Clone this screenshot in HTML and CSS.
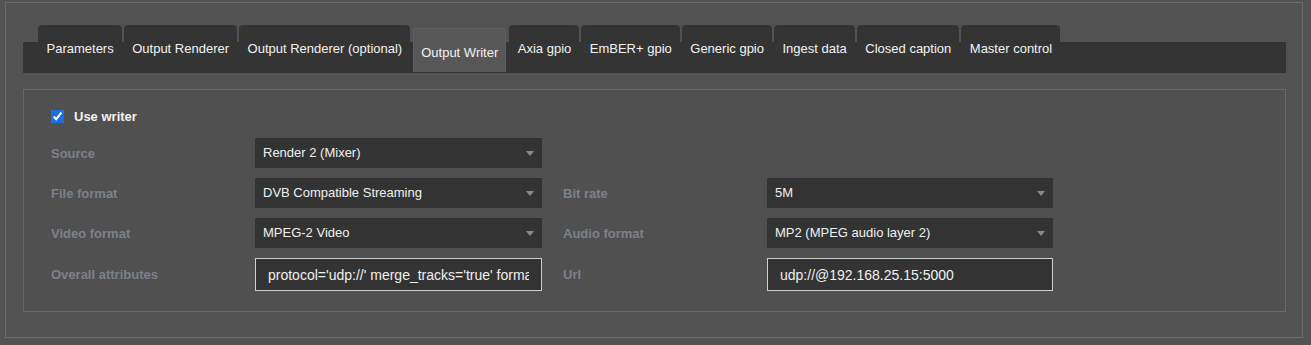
FILE: index.html
```html
<!DOCTYPE html>
<html>
<head lang="en">
    <meta charset="UTF-8">
    <title>Output Writer</title>
    <link rel="stylesheet" href="styles.css">
</head>
<body>
<div class="frame">
    <ul class="tabGroup">
        <li class="tab">Parameters</li>
        <li class="tab">Output Renderer</li>
        <li class="tab">Output Renderer (optional)</li>
        <li class="tab selectedTab">Output Writer</li>
        <li class="tab">Axia gpio</li>
        <li class="tab">EmBER+ gpio</li>
        <li class="tab">Generic gpio</li>
        <li class="tab">Ingest data</li>
        <li class="tab">Closed caption</li>
        <li class="tab">Master control</li>
    </ul>
    <div class="panel">
        <label class="checkRow">
            <input type="checkbox" checked>
            <span>Use writer</span>
        </label>
        <div class="row">
            <div class="field">
                <span class="label">Source</span>
                <div class="select">Render 2 (Mixer)</div>
            </div>
        </div>
        <div class="row">
            <div class="field">
                <span class="label">File format</span>
                <div class="select">DVB Compatible Streaming</div>
            </div>
            <div class="field right">
                <span class="label">Bit rate</span>
                <div class="select">5M</div>
            </div>
        </div>
        <div class="row">
            <div class="field">
                <span class="label">Video format</span>
                <div class="select">MPEG-2 Video</div>
            </div>
            <div class="field right">
                <span class="label">Audio format</span>
                <div class="select">MP2 (MPEG audio layer 2)</div>
            </div>
        </div>
        <div class="row inputRow">
            <div class="field">
                <span class="label">Overall attributes</span>
                <input class="text" type="text" value="protocol='udp://' merge_tracks='true' format='mpegts'">
            </div>
            <div class="field right">
                <span class="label">Url</span>
                <input class="text" type="text" value="udp://@192.168.25.15:5000">
            </div>
        </div>
    </div>
</div>
</body>
</html>
```

FILE: styles.css
```css
*{
    margin: 0;
    padding: 0;
    box-sizing: border-box;
}
html, body{
    height: 100%;
}
body{
    background-color: #525252;
    font-family: "Liberation Sans", Arial, sans-serif;
    font-size: 13px;
    color: #f2f2f2;
    overflow: hidden;
}
.frame{
    width: 1298px;
    margin: 2px 0 0 5px;
    border: 1px solid #6a6a6a;
    padding: 22px 16px 25px 17px;
}
ul.tabGroup{
    list-style: none;
    display: flex;
    height: 48px;
    padding-left: 15px;
    background: linear-gradient(to bottom, transparent 17px, #343434 17px);
}
.tabGroup .tab{
    height: 48px;
    line-height: 48px;
    padding: 0 8px 0 8.5px;
    margin-right: 2px;
    background-color: #343434;
    border-radius: 4px 4px 0 0;
    white-space: nowrap;
    cursor: pointer;
}
.tabGroup .tab.selectedTab{
    height: 44px;
    line-height: 44px;
    margin: 3px 3px 0 1px;
    background-color: #575757;
    border: 1px solid #5f5f5f;
    border-bottom: none;
    border-radius: 2px 2px 0 0;
    padding: 2px 7px 0 7px;
}
.panel{
    margin-top: 16px;
    height: 223px;
    border: 1px solid #676767;
    background-color: #505050;
    padding: 20px 0 0 27px;
}
.checkRow{
    display: flex;
    align-items: center;
    height: 13px;
    margin-bottom: 15px;
    font-weight: bold;
}
.checkRow input{
    width: 13px;
    height: 13px;
    margin: 0 10px 0 0;
    accent-color: #1a6fe0;
}
.row{
    display: flex;
    height: 30px;
    margin-bottom: 10px;
}
.row.inputRow{
    height: 33px;
}
.field{
    display: flex;
    align-items: center;
    width: 491px;
}
.field.right{
    margin-left: 21px;
    width: 490px;
}
.label{
    width: 204px;
    flex: none;
    font-weight: bold;
    color: #7c818b;
}
.select{
    position: relative;
    flex: 1;
    height: 30px;
    line-height: 29px;
    padding-left: 8px;
    background-color: #333333;
    color: #f0f0f0;
}
.select::after{
    content: "";
    position: absolute;
    right: 8px;
    top: 13px;
    border-left: 4px solid transparent;
    border-right: 4px solid transparent;
    border-top: 5px solid #8a8a8a;
}
.text{
    flex: 1;
    width: 0;
    height: 33px;
    padding: 0 12px;
    background-color: #333333;
    border: 1px solid #cfcfcf;
    color: #f0f0f0;
    font-family: "Liberation Sans", Arial, sans-serif;
    font-size: 14px;
    outline: none;
}
```
